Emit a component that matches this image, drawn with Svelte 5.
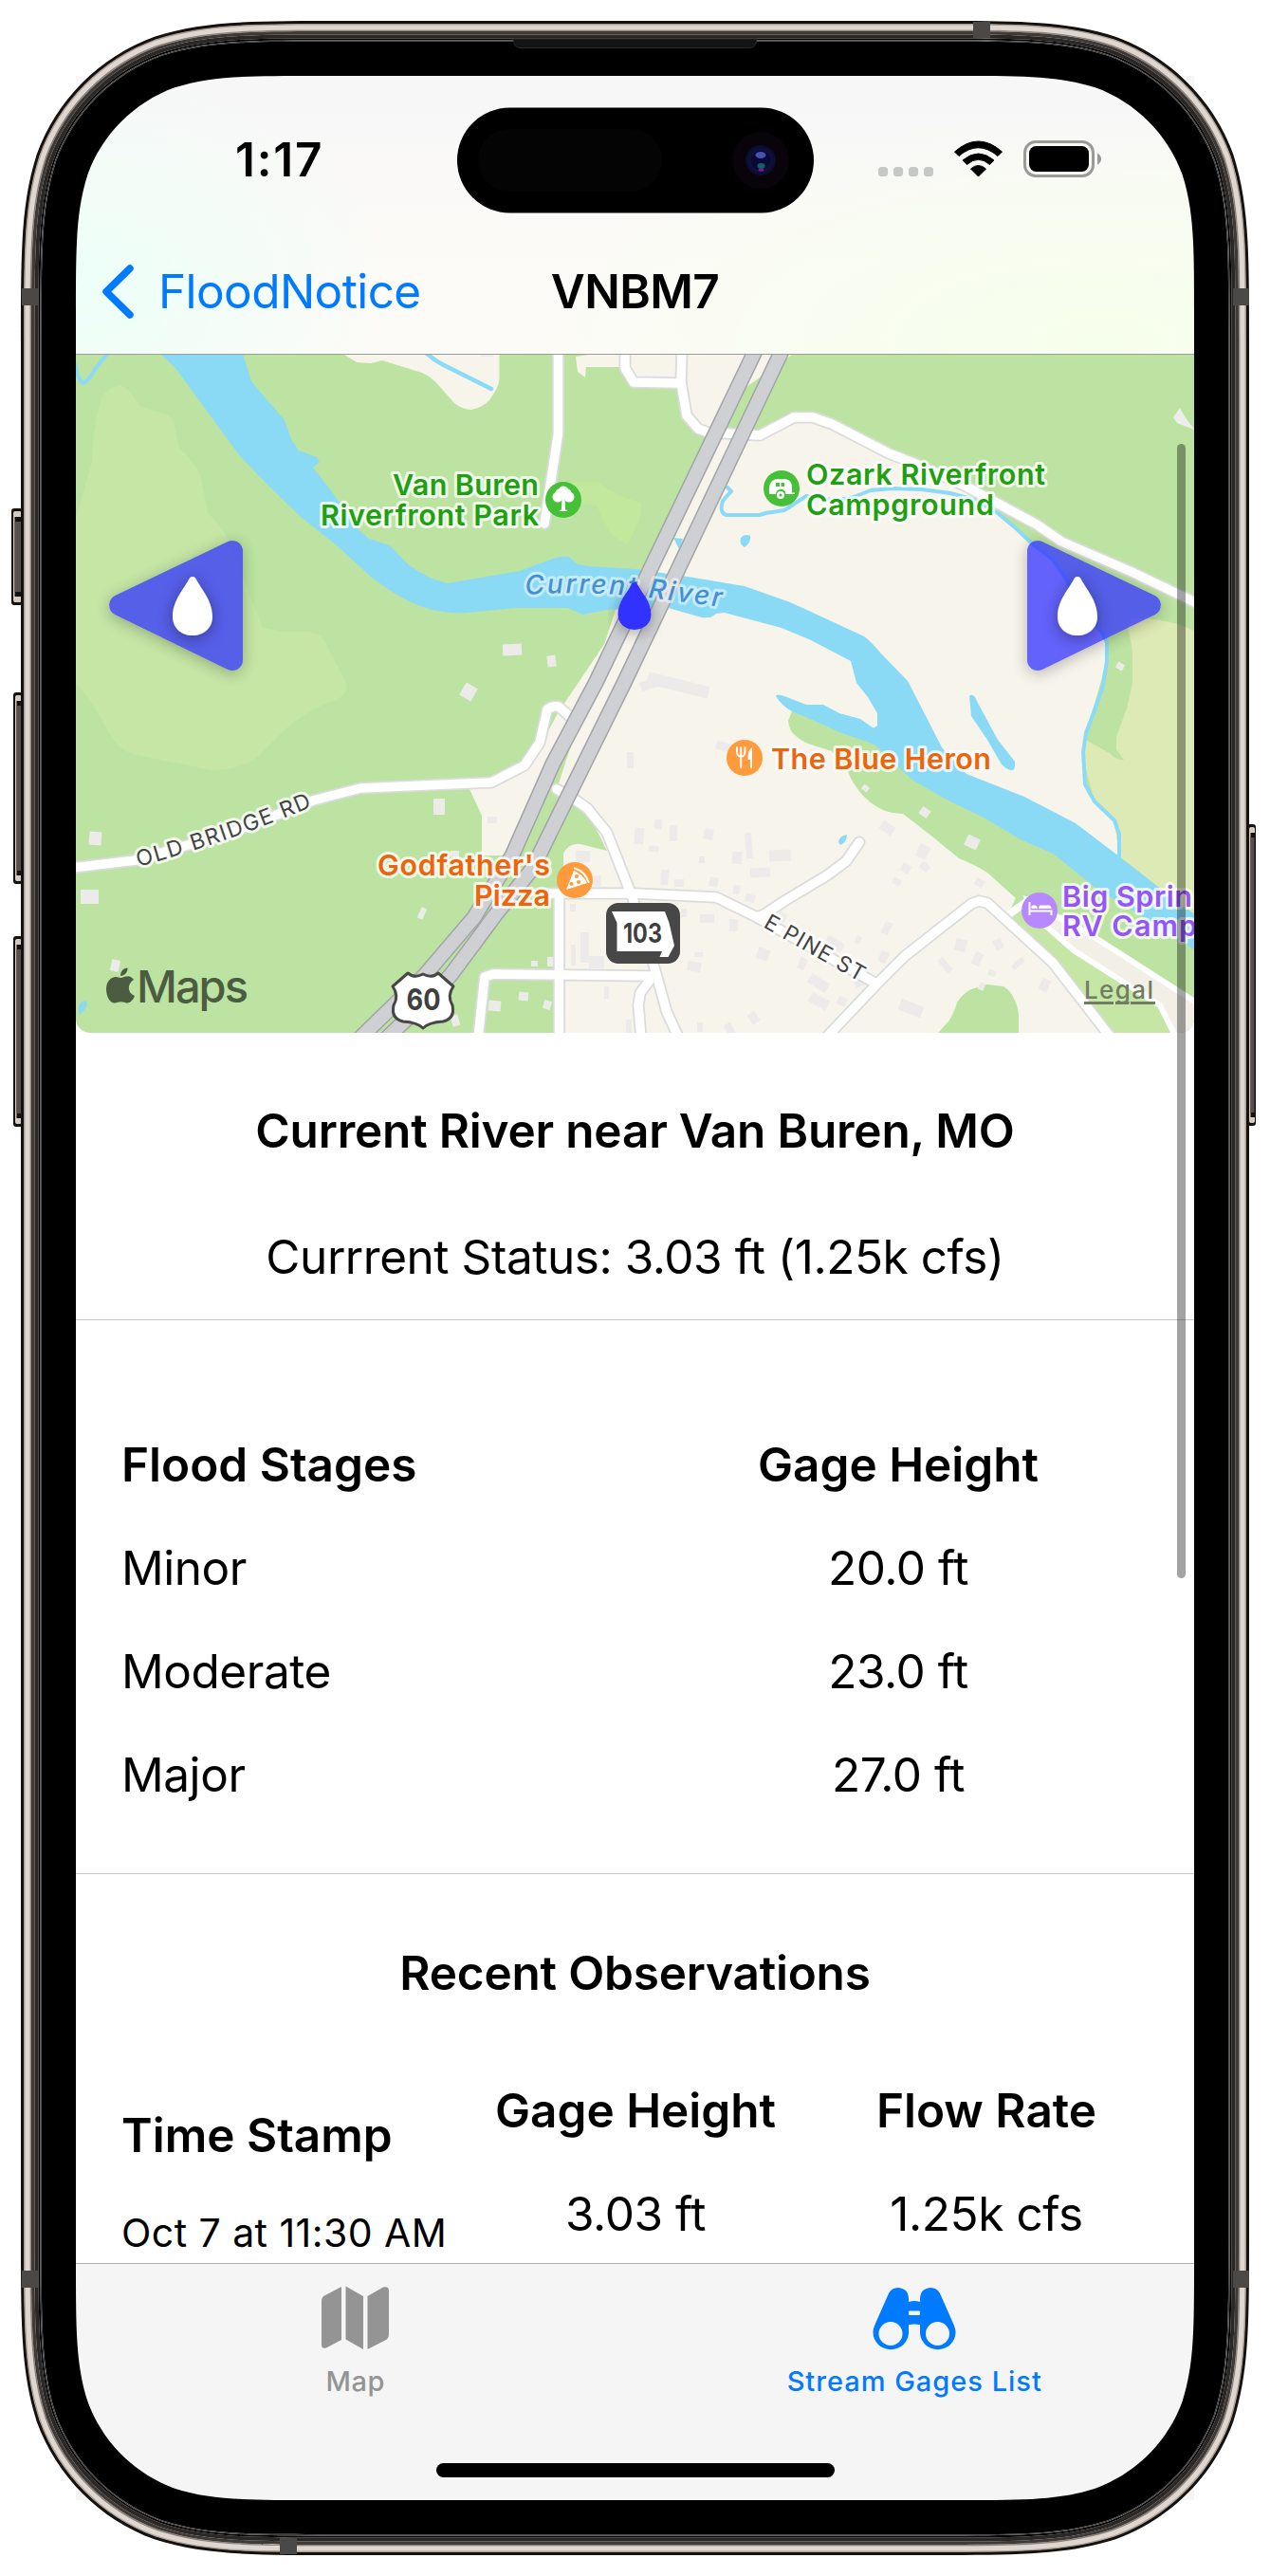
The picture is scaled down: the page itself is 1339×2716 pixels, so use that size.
<script>
  const stages = [
    { name: 'Minor', height: '20.0 ft' },
    { name: 'Moderate', height: '23.0 ft' },
    { name: 'Major', height: '27.0 ft' },
  ];
  const observations = [{ time: 'Oct 7 at 11:30 AM', height: '3.03 ft', flow: '1.25k cfs' }];

  // Rounded rectangle with continuous-curvature corners.
  function squircle(x, y, w, h, r) {
    const X = x + w;
    const Y = y + h;
    const a = 1.528665 * r, b = 1.088493 * r, c = 0.868407 * r;
    const d = 0.631494 * r, e = 0.074911 * r, f = 0.372824 * r, g = 0.16906 * r;
    return [
      `M${x + a} ${y}L${X - a} ${y}`,
      `C${X - b} ${y} ${X - c} ${y} ${X - d} ${y + e}`,
      `C${X - f} ${y + g} ${X - g} ${y + f} ${X - e} ${y + d}`,
      `C${X} ${y + c} ${X} ${y + b} ${X} ${y + a}L${X} ${Y - a}`,
      `C${X} ${Y - b} ${X} ${Y - c} ${X - e} ${Y - d}`,
      `C${X - g} ${Y - f} ${X - f} ${Y - g} ${X - d} ${Y - e}`,
      `C${X - c} ${Y} ${X - b} ${Y} ${X - a} ${Y}L${x + a} ${Y}`,
      `C${x + b} ${Y} ${x + c} ${Y} ${x + d} ${Y - e}`,
      `C${x + f} ${Y - g} ${x + g} ${Y - f} ${x + e} ${Y - d}`,
      `C${x} ${Y - c} ${x} ${Y - b} ${x} ${Y - a}L${x} ${y + a}`,
      `C${x} ${y + b} ${x} ${y + c} ${x + e} ${y + d}`,
      `C${x + g} ${y + f} ${x + f} ${y + g} ${x + d} ${y + e}`,
      `C${x + c} ${y} ${x + b} ${y} ${x + a} ${y}Z`,
    ].join('');
  }
  const inset = (n) => squircle(22 + n, 22 + n, 1295 - 2 * n, 2672 - 2 * n, 223 - n);
  const ring = (from, to) => inset(from) + inset(to);

  // Metal body from the outside edge in to the glass.
  const rings = [
    [0, 3.5, '#15110f'],
    [3, 5, '#aaa098'],
    [4.5, 9.5, '#ded6cf'],
    [9.5, 11, '#8e837a'],
    [11, 14.5, '#3f3a37'],
    [14.5, 18.5, '#2b2725'],
    [18.5, 20.5, '#050505'],
    [20.5, 21.8, '#3d3d3d'],
    [21.8, 58, '#000'],
  ].map(([from, to, color]) => ({ d: ring(from, to), color }));

  const bands = [
    [1026, 23, 18, 17], [295, 2676, 18, 17],
    [23, 304, 17, 18], [23, 2394, 17, 18], [1300, 304, 17, 18], [1300, 2394, 17, 18],
  ];
  const keys = [
    [12, 536, 12, 102], [14, 730, 10, 202], [14, 987, 10, 201], [1315, 869, 9, 318],
  ];

  const roads = [
    'M588.500 374V457L574 552',
    'M659 370V388L668 403 718 404',
    'M719 370 718 403 724 438 736 452 747 456 801 459 837 440H857L877 447 937 478 963 488 1019 513 1093 553 1119 571 1193 603 1262 636',
    'M76 915 143 907 246 877 330 844 380 831 518 825 553 807 569 783 577 748Q582 744 589 745L606 760',
    'M587 832 606 843 619 852 640 878 667 947 688 1013 703 1067 716 1095',
    'M579 942 669 942 755 946 796 966 924 1037',
    'M798 967 806 964 827 950 872 923 892 908 906 888',
    'M870 1095 924 1038 954 1008 1024 953 1032 950 1041 952 1110 1015 1172 1095',
    'M589.500 942V1095',
    'M504 1095 511 1030 520 1027 686 1029',
    'M686 1032 675 1047 673 1060 676 1095',
  ];
  const westLane = 'M803 356 628 720 583 805 540 902 500 967 448 1028 376 1098';
  const eastLane = 'M831 356 658 720 579 880 562 915 522 965 476 1027 460 1045 404 1098';

  const creek = 'M767 514 771 518 762 528Q758 541 766 543H801L807 541 827 538 850 523M850 523Q880 530 900 524L918 517 941 515 972 516 1002 520 1028 527 1052 541 1071 557 1087 572 1110 590 1126 613 1136 637 1158 660 1167 677V697L1162 727 1145 773 1142 793 1144 827 1154 845 1175 865 1180 880V905';
  const river = 'M166 370 185 388 223 440 254 482 284 513 315 543 357 577 391 608Q425 635 456 643Q475 647 491 646L544 641H598L615 648 640 643 701 640 740 651H749L755 647 764 646 824 662 855 675 897 697 903 720 915 735 925 752V765Q922 768 920 767L907 758 885 752 868 743H850L827 734Q818 731 818 734Q824 744 835 750L859 760 885 772 922 785 937 800 963 823 998 843 1037 862 1076 885 1110 900 1119 907 1156 937 1236 985 1262 1004V966L1221 935 1180 903 1134 868 1080 840 1019 816 993 788 972 747 957 718 928 688Q918 676 911 671L868 651 833 635 785 618 725 608 670 600 621 597 609 595 600 587H590L575 592 548 602 495 611 472 615Q450 610 430 595L411 575 389 568 380 560 345 512 330 493 337 487 334 482 315 475 307 463 300 443 265 402 255 370Z';

  // Building footprints: x, y, width, height, rotation.
  const buildings = [
    [530, 679, 20, 12, -3], [577, 691, 9, 12, -8], [487, 722, 14, 15, 30], [457, 842, 12, 17, 0],
    [94, 877, 13, 14, 5], [85, 938, 19, 15, 0], [117, 1012, 9, 12, 12], [442, 957, 6, 12, 25],
    [475, 897, 9, 8, 0], [514, 861, 10, 7, 0], [626, 364, 16, 7, 0], [507, 370, 13, 6, 0], [607, 897, 15, 12, 0],
    [625, 923, 9, 12, 0], [612, 983, 9, 32, 0], [621, 1008, 16, 13, 0], [602, 996, 5, 22, 0], [601, 953, 6, 8, 0],
    [560, 1013, 7, 6, 0], [577, 1009, 8, 10, 0], [515, 1055, 13, 11, 5], [547, 1046, 10, 9, 5], [573, 1055, 8, 9, 15],
    [476, 1070, 8, 12, -15], [661, 793, 7, 17, 0], [675, 716, 22, 10, -20], [682, 716, 66, 13, 14], [755, 783, 18, 9, 16],
    [690, 864, 8, 10, 8], [669, 873, 10, 17, 5], [706, 870, 8, 17, 0], [684, 892, 11, 6, 8], [742, 874, 10, 11, 8],
    [786, 878, 7, 27, -5], [811, 896, 23, 12, -2], [772, 898, 10, 13, 3], [737, 903, 6, 7, 0], [791, 915, 21, 10, -3],
    [697, 917, 8, 16, 4], [711, 927, 10, 8, 0], [748, 925, 9, 10, 12], [773, 933, 7, 10, 12], [786, 943, 10, 8, 15],
    [738, 964, 15, 9, 0], [769, 969, 9, 13, 5], [718, 958, 6, 9, 0], [798, 1000, 13, 12, 20], [725, 1014, 14, 10, 10],
    [732, 1004, 9, 5, 0], [842, 1010, 8, 12, 25], [852, 1031, 22, 11, 32], [853, 1050, 21, 11, 30], [883, 1051, 9, 9, 25],
    [902, 987, 6, 8, 25], [931, 972, 8, 13, 25], [870, 990, 20, 10, 30], [927, 1003, 9, 12, 25], [1007, 990, 12, 13, 15],
    [1048, 990, 9, 11, -25], [1026, 1004, 9, 14, 25], [988, 1014, 17, 7, 48], [1066, 1013, 15, 6, -42], [1042, 1023, 8, 6, 20],
    [1097, 1032, 9, 13, 25], [1032, 1036, 6, 8, 20], [948, 1057, 25, 12, 22], [790, 1067, 9, 12, -35], [765, 1079, 8, 12, -25],
    [928, 868, 15, 10, 35], [967, 891, 12, 14, 25], [950, 911, 10, 9, 30], [970, 910, 10, 8, 40], [941, 926, 9, 7, 30],
    [1028, 927, 9, 8, 30], [970, 852, 10, 9, 35], [1018, 882, 14, 12, 25], [909, 828, 7, 6, 40], [1177, 699, 8, 7, 30],
    [901, 1032, 10, 8, -25], [819, 962, 10, 10, 30], [735, 1078, 6, 10, 0], [660, 1075, 6, 14, 0], [637, 1040, 5, 13, 0],
  ];
</script>

{#snippet drop(x, y, w, h, fill)}
  <svg {x} {y} width={w} height={h} viewBox="0 0 42 62" preserveAspectRatio="none" overflow="visible">
    <path d="M21 0C19 0 18 1 17 3C12 13 0 25 0 42C0 54 9 62 21 62S42 54 42 42C42 25 30 13 25 3C24 1 23 0 21 0Z" {fill} />
  </svg>
{/snippet}

<div class="device">
  <div class="screen">
    <header>
      <div class="status">
        <span class="clock">1:17</span>
        <div class="indicators">
          <svg class="dots" viewBox="926 148 58 40" width="58" height="40">
            {#each [0, 1, 2, 3] as i}
              <rect x={926 + i * 16} y="176" width="10" height="10" rx="3.500" fill="#c6c8c6" />
            {/each}
          </svg>
          <svg viewBox="1006 148 51 40" width="51" height="40">
            <path d="M1006.500 160Q1031.500 138 1056.500 160L1052 164.500Q1031.500 147 1011 164.500Z" stroke="#000" stroke-linejoin="round" />
            <path d="M1015 169Q1031.500 155 1048 169L1043.500 173.500Q1031.500 163 1019.500 173.500Z" stroke="#000" stroke-linejoin="round" />
            <path d="M1023.500 178Q1031.500 171 1039.500 178L1031.500 186Z" stroke="#000" stroke-linejoin="round" />
          </svg>
          <svg viewBox="1079 148 82 40" width="82" height="40">
            <rect x="1080.500" y="149.500" width="72" height="36" rx="11.500" fill="none" stroke="#9a9b99" stroke-width="3" />
            <rect x="1085" y="154" width="63" height="27" rx="7.500" />
            <path d="M1157 161.500Q1161 163.500 1161 167.500T1157 173.500Z" fill="#9a9b99" />
          </svg>
        </div>
      </div>
      <nav>
        <div class="back">
          <svg viewBox="107 276 35 61" width="35" height="61">
            <path d="M137 282 112 306.500 137 331" fill="none" stroke="#007aff" stroke-width="7.500" stroke-linecap="round" stroke-linejoin="round" />
          </svg>
          <span>FloodNotice</span>
        </div>
        <h1>VNBM7</h1>
      </nav>
    </header>

    <main>
      <svg class="map" viewBox="80 374 1179 715" width="1179" height="715">
        <defs>
          <filter id="shade" x="-30%" y="-30%" width="160%" height="160%">
            <feDropShadow dx="0" dy="3" stdDeviation="8" flood-color="#000" flood-opacity="0.35" />
          </filter>
          <path id="riverLine" d="M554 627Q625 622 692 631T775 641" />
          <path id="bridgeLine" d="M146 914Q246 886 332 849" />
          <path id="pineLine" d="M804 977 915 1040" />
        </defs>

        <!-- ground -->
        <rect x="80" y="374" width="1179" height="715" fill="#bce3a1" />
        <path d="M127 406Q112 408 106 423Q97 455 97 487L80 547V720Q98 740 116 775Q126 790 139 795L223 812Q250 812 269 800L303 767Q330 745 355 738Q368 730 365 720L343 677Q338 667 325 666L300 666 277 662 238 563 219 540 212 503Q206 487 189 473L183 445Q180 436 165 434L146 427Q138 410 127 406Z" fill="#c5e6a5" />
        <path d="M602 508H632Q645 522 676 530Q678 545 662 573Q645 568 640 556L629 533 602 531Z" fill="#c2e89c" />
        <g fill="#f6f4eb">
          <path d="M363 374 376 382 391 383 403 380 445 393Q456 398 464 408L479 425Q488 432 497 432Q508 430 516 422Q526 408 526.500 400V374Z" />
          <path d="M607 376 609 392 617 398 618 387 657 387 668 403 718 404 724 438 747 456 770 420 835 374H620Z" />
          <path d="M750 456 801 459 837 440H857L877 447 937 478 1019 513 1052 541 1110 590 1136 637 1167 677V697L1145 773 1142 793 1144 827 1175 865 1180 903 1000 830 660 655 700 560Z" />
          <path d="M650 640 760 640 910 690 1000 840 1071 947 1063 965 1110 1015 1169 1089H594V950L594 900Q600 888 612 890L640 897 619 855 585 838Z" />
          <path d="M588 752 570 786 553 808 520 827 495 832 508 860V902L535 902 600 790 640 712 670 650 650 660Z" />
        </g>
        <path d="M835 750 831 760Q832 770 838 775Q845 782 855 785L877 792 894 813Q898 826 911 840Q925 854 941 857L952 858 983 882 1011 905Q1028 912 1041 920L1071 947 1063 965 1110 1015 1169 1089H1259V950L1000 820 900 760Z" fill="#bce3a1" />
        <path d="M1063 965 1084 955 1132 1000 1223 1060 1240 1089H1169L1110 1015Z" fill="#c5e6a5" />
        <path d="M989 1089 1000 1077Q1006 1068 1009 1057Q1014 1048 1024 1043L1041 1038 1058 1040Q1066 1045 1069 1053Q1074 1062 1074 1073V1089Z" fill="#bce3a1" />
        <path d="M1193 652 1189 663Q1194 680 1194 693V720L1188 747 1177 777V790L1185 801Q1176 801 1171 795L1145 780 1142 800 1154 845 1175 865 1180 903 1221 935 1259 966V665Q1240 656 1223 654Q1205 651 1193 652Z" fill="#deeab5" />
        <path d="M1237 440 1244 430Q1252 445 1259 452L1259 453 1241 446Z" fill="#ededeb" />

        <g fill="#ecebe9">
          {#each buildings as [x, y, w, h, r]}
            <rect {x} {y} width={w} height={h} transform="rotate({r} {x + w / 2} {y + h / 2})" />
          {/each}
        </g>

        <!-- water -->
        <g fill="#8bdaf5">
          <path d={river} />
          <path d="M1022 734Q1025 731 1028 735L1032 743 1052 780 1070 803Q1071 811 1067 812Q1062 812 1056 806L1041 780 1024 755Z" />
          <path d="M781 567Q785 562 791 565Q792 572 785 577Q779 574 781 567Z" />
          <path d="M710 567 720 568 716 579Z" />
          <path d="M884 888Q885 881 893 880Q893 888 886 891Z" />
          <path d="M83 1066Q82 1056 90 1055Q95 1060 84 1070Z" />
        </g>
        <g fill="none" stroke="#8bdaf8" stroke-width="4" stroke-linejoin="round" stroke-linecap="round">
          <path d={creek} />
          <path d="M449 372Q458 380 468 385L518 410" stroke-width="4.500" />
          <path d="M80 385Q81 400 88 404Q93 402 101 388L114 372" />
        </g>

        <!-- local streets -->
        <path d="M1084 950 1149 985 1263 1058V1100H1243L1223 1060 1132 1002 1090 965Z" fill="#f2efe6" stroke="#fff" stroke-width="6" />
        <path d="M1064 964 1086 948" stroke="#fff" stroke-width="8" />
        <g fill="none" stroke="#dadbdb" stroke-width="13" stroke-linejoin="round">
          {#each roads as d}<path {d} stroke-linecap="round" />{/each}
        </g>
        <g fill="none" stroke="#fff" stroke-width="9.500" stroke-linejoin="round">
          {#each roads as d}<path {d} stroke-linecap="round" />{/each}
        </g>

        <!-- highway -->
        <g fill="none" stroke-linejoin="round">
          <path d={westLane} stroke="#a3a4a6" stroke-width="17" />
          <path d={eastLane} stroke="#a3a4a6" stroke-width="17" />
          <path d={westLane} stroke="#cfd0d4" stroke-width="14" />
          <path d={eastLane} stroke="#cfd0d4" stroke-width="14" />
        </g>

        <!-- street and water names -->
        <g class="street">
          <text textLength="194"><textPath href="#bridgeLine">OLD BRIDGE RD</textPath></text>
          <text textLength="118"><textPath href="#pineLine">E PINE ST</textPath></text>
        </g>
        <text class="water" textLength="207"><textPath href="#riverLine">Current River</textPath></text>

        <!-- places -->
        <g class="poi park">
          <text x="414" y="522" textLength="154">Van Buren</text>
          <text x="338" y="554" textLength="230">Riverfront Park</text>
          <text x="850" y="511" textLength="252">Ozark Riverfront</text>
          <text x="850" y="543" textLength="198">Campground</text>
          <circle cx="594" cy="527" r="19" />
          <circle cx="824" cy="515" r="19" />
        </g>
        <g fill="#fff">
          <circle cx="594" cy="518" r="5.500" /><circle cx="588" cy="524" r="5.500" /><circle cx="600" cy="524" r="5.500" />
          <circle cx="590" cy="520" r="4.500" /><circle cx="598" cy="520" r="4.500" />
          <path d="M592.500 522H595.500L596 537 598.500 539H589.500L592 537Z" />
          <path d="M811 520V514Q812 505 821 505H826Q835 505 835 514V519.500H838V521H828.500A5 5 0 0 0 818 521H812Q811 521 811 520Z" />
          <circle cx="823" cy="522" r="4" />
        </g>
        <path d="M818 509H822V513H818ZM823.500 509H827V513H823.500Z" fill="#46c038" />
        <circle cx="823" cy="522" r="1.500" fill="#46c038" />

        <g class="poi food">
          <text x="813" y="811" textLength="232">The Blue Heron</text>
          <text x="398" y="923" textLength="182">Godfather's</text>
          <text x="500" y="955" textLength="80">Pizza</text>
          <circle cx="785" cy="799" r="19" />
          <circle cx="606" cy="928" r="19" />
        </g>
        <path d="M777 788V793Q777 797 781 797.500T785.500 793V788M781.200 788V809" fill="none" stroke="#fff" stroke-width="2" stroke-linecap="round" />
        <path d="M793 788V809Q793 810 792 810T791 809V801H788.500Q788 791 793 788Z" fill="#fff" />
        <path d="M605 918Q615 922 619 931L597 938Z" fill="#fff" />
        <path d="M606 915.500Q617 919 620.500 930" fill="none" stroke="#fff" stroke-width="2.200" stroke-linecap="round" />
        <g fill="#ff9b3d"><circle cx="602.500" cy="932" r="2.100" /><circle cx="608" cy="924" r="2.100" /><circle cx="610" cy="930" r="2.100" /></g>

        <g class="poi stay">
          <text x="1120" y="956" textLength="137">Big Sprin</text>
          <text x="1120" y="987" textLength="142">RV Camp</text>
          <circle cx="1096" cy="960" r="19" />
        </g>
        <path d="M1085.500 951V965M1085.500 960.500H1108.500V965" fill="none" stroke="#fff" stroke-width="2" />
        <path d="M1087.500 958V955.500Q1088 954.500 1089.500 954.500H1092Q1093.500 955 1094 958ZM1095 958 1096 954.500H1106Q1108.500 955 1108.500 958Z" fill="#fff" />

        <!-- route shields -->
        <path d="M430 1026Q437 1032 446 1027Q455 1032 462 1026L478 1040Q471 1050 477 1060Q480 1074 467 1077Q452 1078 446 1084Q440 1078 425 1077Q412 1074 415 1060Q421 1050 414 1040Z" fill="#fff" stroke="#474747" stroke-width="3" stroke-linejoin="round" />
        <text class="shield" x="428.500" y="1065" font-size="31" textLength="36" lengthAdjust="spacingAndGlyphs">60</text>
        <rect x="639" y="952" width="78" height="64" rx="13" fill="#474747" />
        <path d="M645 961H701L705.500 973 711 997 704.500 1009H695.500L698 1003H650.500V973Z" fill="#fff" />
        <text class="shield" x="657" y="994" font-size="28" textLength="41" lengthAdjust="spacingAndGlyphs">103</text>

        <!-- attribution -->
        <g fill="#4c5c40">
          <path d="M127 1031C131 1031 136 1026 141 1033C134 1037 134 1047 142 1050C140 1055 136 1059 132 1057C129 1056 126 1056 123 1057C117 1060 112 1051 112 1043C112 1035 117 1030 122 1030C124 1030 126 1031 127 1031Z" />
          <path d="M127 1029C127 1024 130 1021 134.500 1020.500C135 1025 131 1029 127 1029Z" />
          <text class="brand" x="144" y="1057" textLength="118">Maps</text>
        </g>
        <g fill="#6f7d62">
          <text class="legal" x="1143" y="1053" textLength="73">Legal</text>
          <path d="M1143 1056H1174V1059H1143ZM1176 1056H1191L1190 1059H1176ZM1192 1056H1218V1059H1192Z" />
        </g>

        <!-- gage marker and pager arrows -->
        <g filter="url(#shade)">{@render drop(651.5, 614, 35, 50, '#3333ff')}</g>
        <g filter="url(#shade)" opacity="0.75">
          <path d="M126 638 245 581V696Z" fill="#3333ff" stroke="#3333ff" stroke-width="22" stroke-linejoin="round" />
          <path d="M1213 638 1094 581V696Z" fill="#3333ff" stroke="#3333ff" stroke-width="22" stroke-linejoin="round" />
        </g>
        <g filter="url(#shade)">
          {@render drop(182, 608, 42, 62, '#fff')}
          {@render drop(1115, 608, 42, 62, '#fff')}
        </g>
      </svg>

      <section class="summary">
        <h2>Current River near Van Buren, MO</h2>
        <p>Currrent Status: 3.03 ft (1.25k cfs)</p>
      </section>

      <section class="stages">
        <h3>Flood Stages</h3>
        <h3 class="mid">Gage Height</h3>
        {#each stages as stage}
          <p>{stage.name}</p>
          <p class="mid">{stage.height}</p>
        {/each}
      </section>

      <section class="recent">
        <h2>Recent Observations</h2>
        <div class="columns">
          <div class="times">
            <h3>Time Stamp</h3>
            {#each observations as o}<p>{o.time}</p>{/each}
          </div>
          <div class="mid">
            <h3>Gage Height</h3>
            {#each observations as o}<p>{o.height}</p>{/each}
          </div>
          <div class="mid">
            <h3>Flow Rate</h3>
            {#each observations as o}<p>{o.flow}</p>{/each}
          </div>
        </div>
      </section>
    </main>

    <footer>
      <div class="tab">
        <svg viewBox="339 2410 72 68" width="72" height="68">
          <path d="M360 2411V2467L344 2475.500Q339 2477 339 2472V2426Q339 2422 342 2420.500ZM364.500 2410.500 383 2421V2477L364.500 2466.500ZM387.500 2421 404 2411.500Q410 2410 410 2415V2461Q410 2465 407 2467L387.500 2477Z" fill="#949494" />
        </svg>
        <span>Map</span>
      </div>
      <div class="tab active">
        <svg viewBox="919 2410 90 68" width="90" height="68" fill="#007aff">
          <path d="M937 2418Q940 2412 947 2412Q958 2413 958 2424V2427Q964 2425 970 2427V2424Q970 2413 981 2412Q988 2412 991 2418L1006 2452Q1007.500 2456 1007.500 2459A18.500 18 0 0 1 970 2459V2451Q964 2450 958 2451V2459A18.500 18 0 0 1 920.500 2459Q920.500 2456 922 2452Z" />
          <rect x="958" y="2436.500" width="12" height="4.500" rx="1" fill="#f5f5f5" />
          <circle cx="939" cy="2460.500" r="12.500" fill="#f5f5f5" />
          <circle cx="988.500" cy="2460.500" r="12.500" fill="#f5f5f5" />
        </svg>
        <span>Stream Gages List</span>
      </div>
      <i class="home"></i>
    </footer>
    <i class="scrollbar"></i>
  </div>

  <svg class="frame" viewBox="0 0 1339 2716" width="1339" height="2716">
    <defs>
      <linearGradient id="key" x1="0" x2="1">
        <stop offset="0" stop-color="#1a1614" />
        <stop offset="0.150" stop-color="#1a1614" />
        <stop offset="0.250" stop-color="#d5cbc2" />
        <stop offset="0.450" stop-color="#5a524e" />
        <stop offset="0.800" stop-color="#4c4643" />
        <stop offset="1" stop-color="#15110f" />
      </linearGradient>
      <radialGradient id="lens">
        <stop offset="0" stop-color="#2a2f8c" />
        <stop offset="0.600" stop-color="#11124a" />
        <stop offset="1" stop-color="#0b0b24" />
      </radialGradient>
    </defs>
    {#each keys as [x, y, w, h]}
      <rect {x} {y} width={w} height={h} rx="3" fill="#15110f" />
      <rect x={x + 2} y={y + 3} width={w - 3} height={h - 6} rx="2" fill="#d5cbc2" />
      <rect x={x + 3.5} y={y + 9} width={w - 4} height={h - 18} fill="#15110f" />
      <rect x={x + 3.5} y={y + 14} width={w - 5} height={h - 28} fill="#57504c" />
    {/each}
    {#each rings as r}
      <path d={r.d} fill={r.color} fill-rule="evenodd" />
    {/each}
    {#each bands as [x, y, w, h]}
      <rect {x} {y} width={w} height={h} fill="#4b4947" />
    {/each}
    <path d="M541 41H798Q797 50 791 50.500H548Q542 50 541 41Z" fill="#131313" stroke="#2b2b2b" />
    <rect x="482" y="113.500" width="376" height="111" rx="55.500" />
    <rect x="504" y="136" width="194" height="66" rx="33" fill="#040404" />
    <circle cx="802" cy="169" r="30" fill="#08040a" />
    <circle cx="802" cy="169" r="16" fill="url(#lens)" />
    <circle cx="802" cy="169" r="10.500" fill="#080a35" />
    <ellipse cx="802" cy="163.500" rx="5.500" ry="3.500" fill="#4a50b0" />
    <ellipse cx="802.500" cy="175" rx="4" ry="3" fill="#14606a" />
    <ellipse cx="802.500" cy="179" rx="3" ry="1.500" fill="#7a1c9a" />
  </svg>
</div>

<style>
  :global(body) {
    background: #fff;
  }
  .device {
    position: relative;
    width: 1339px;
    height: 2716px;
    box-sizing: border-box;
    padding: 80px;
    font-family: Inter, 'Liberation Sans', sans-serif;
    font-size: 49.5px;
    line-height: 60px;
    color: #000;
  }
  .screen {
    position: relative;
    display: flex;
    flex-direction: column;
    width: 1179px;
    height: 2556px;
    background: #fff;
    overflow: hidden;
  }
  svg {
    display: block;
    flex: none;
  }
  .frame {
    position: absolute;
    inset: 0;
  }
  h1, h2, h3, p {
    margin: 0;
    font-size: inherit;
    white-space: nowrap;
  }
  h1, h2, h3 {
    font-weight: 600;
  }
  p {
    letter-spacing: -0.45px;
  }
  .mid {
    text-align: center;
  }

  header {
    box-sizing: border-box;
    height: 294px;
    flex: none;
    border-bottom: 1px solid #9c9d99;
    background:
      radial-gradient(ellipse 330px 230px at 0 75%, #ecfff8 0, rgba(240, 255, 249, 0) 100%),
      radial-gradient(ellipse 620px 240px at 92% 95%, #f6ffeb 0, rgba(247, 255, 239, 0) 100%),
      linear-gradient(#f7f7f8, #fbfaf7 55%, #fcfbf7);
  }
  .status {
    box-sizing: border-box;
    height: 161px;
    padding: 15px 98px 0 168px;
    display: flex;
    align-items: center;
    justify-content: space-between;
  }
  .clock {
    font-weight: 600;
    letter-spacing: 1.8px;
  }
  .indicators {
    display: flex;
    gap: 22px;
  }
  nav {
    display: grid;
    grid-template-columns: 1fr auto 1fr;
    align-items: center;
    height: 132px;
  }
  .back {
    display: flex;
    align-items: center;
    gap: 25px;
    padding-left: 27px;
    color: #007aff;
    letter-spacing: -0.6px;
  }
  h1 {
    letter-spacing: -0.6px;
  }

  main {
    flex: none;
    height: 2012px;
    overflow: hidden;
  }
  .map {
    border-radius: 0 0 15px 15px;
    overflow: hidden;
  }
  .poi text, .street text, .water {
    paint-order: stroke;
    stroke: rgba(255, 255, 255, 0.78);
    stroke-width: 6px;
    stroke-linejoin: round;
  }
  .poi text {
    font-size: 30.5px;
    font-weight: 600;
  }
  .park text { fill: #20a010; }
  .park circle { fill: #46c038; }
  .food text { fill: #ee640a; }
  .food circle { fill: #ff9b3d; }
  .stay text { fill: #9655fa; }
  .stay circle { fill: #b888ff; }
  .street text {
    font-size: 23px;
    fill: #444;
  }
  .water {
    font-size: 28px;
    font-style: italic;
    font-weight: 500;
    fill: #468fd4;
    stroke: rgba(255, 255, 255, 0.5);
  }
  .shield {
    font-weight: 700;
    fill: #3f3f3f;
  }
  .brand {
    font-size: 47px;
    font-weight: 500;
  }
  .legal {
    font-size: 26px;
    font-weight: 500;
  }

  .summary {
    display: flex;
    flex-direction: column;
    align-items: center;
    gap: 73px;
    padding: 73px 0 36px;
    border-bottom: 1px solid #c6c6c8;
  }
  .summary h2, .recent h2 {
    letter-spacing: -0.2px;
  }
  .stages {
    display: grid;
    grid-template-columns: 555px 528px;
    row-gap: 49px;
    padding: 122px 48px 74px;
    border-bottom: 1px solid #c6c6c8;
  }
  .recent {
    padding: 74px 34px 0 48px;
  }
  .recent h2 {
    margin-right: -14px;
    text-align: center;
    transform: translateX(-14px);
  }
  .columns {
    display: grid;
    grid-template-columns: 357px 370px 370px;
    padding-top: 85px;
  }
  .columns > div {
    display: flex;
    flex-direction: column;
    gap: 49px;
  }
  .columns .times {
    gap: 43px;
    padding-top: 26px;
  }
  .times p {
    font-size: 41px;
    letter-spacing: 0.45px;
  }

  footer {
    position: relative;
    display: grid;
    grid-template-columns: 1fr 1fr;
    flex: 1;
    border-top: 1px solid #b2b2b2;
    background: #f5f5f5;
  }
  .tab {
    display: flex;
    flex-direction: column;
    align-items: center;
    gap: 15px;
    padding-top: 23px;
    font-size: 29px;
    font-weight: 500;
    line-height: 36px;
    letter-spacing: 0.5px;
    color: #949494;
  }
  .tab.active {
    color: #007aff;
    letter-spacing: 1px;
  }
  .home {
    position: absolute;
    left: 380px;
    bottom: 24px;
    width: 420px;
    height: 15px;
    border-radius: 8px;
    background: #000;
  }
  .scrollbar {
    position: absolute;
    left: 1161px;
    top: 388px;
    width: 9px;
    height: 1196px;
    border-radius: 5px;
    background: rgba(0, 0, 0, 0.36);
  }
</style>
